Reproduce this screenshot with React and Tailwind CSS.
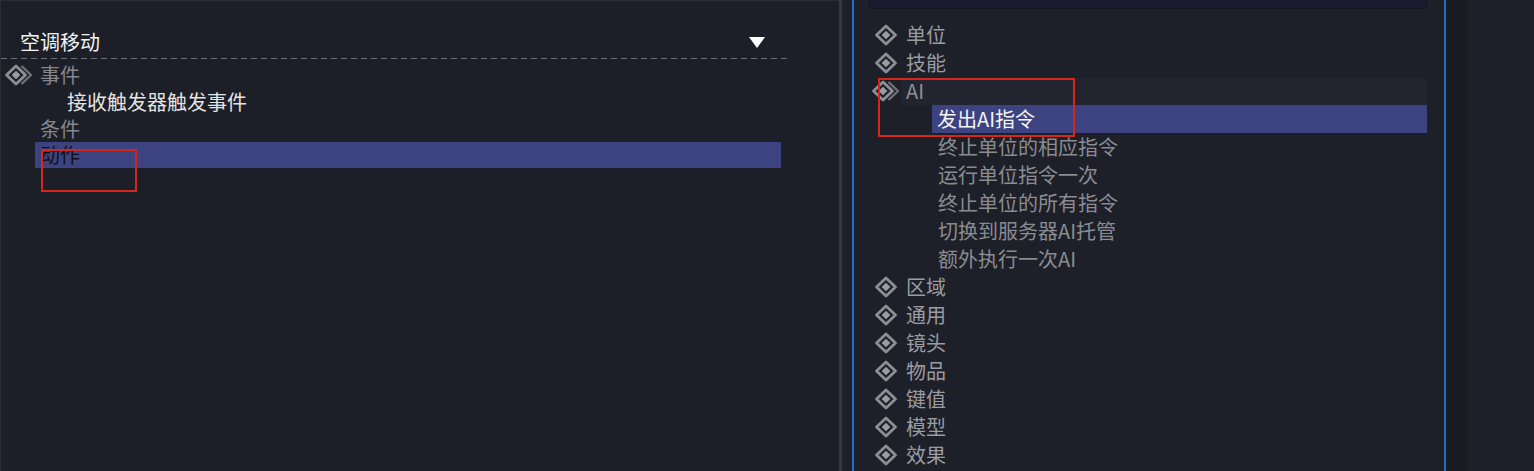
import React from "react";

function Diamond({ expanded = false, className = "" }) {
  return (
    <svg
      width={expanded ? 30 : 24}
      height="22"
      viewBox={expanded ? "0 0 30 22" : "0 0 24 22"}
      className={"shrink-0 " + className}
    >
      <polygon
        points="12,2 21.5,11 12,20 2.5,11"
        fill="none"
        stroke="#8d8f95"
        strokeWidth="2.8"
        strokeLinejoin="round"
      />
      <polygon points="12,6.8 16.4,11 12,15.2 7.6,11" fill="#9a9ca2" />
      {expanded && (
        <polyline
          points="17.5,2 27,11 17.5,20"
          fill="none"
          stroke="#6f7177"
          strokeWidth="2.4"
          strokeLinejoin="round"
        />
      )}
    </svg>
  );
}

const cats = ["区域", "通用", "镜头", "物品", "键值", "模型", "效果"];
const aiItems = [
  "终止单位的相应指令",
  "运行单位指令一次",
  "终止单位的所有指令",
  "切换到服务器AI托管",
  "额外执行一次AI",
];

export default function App() {
  return (
    <div className="flex h-[471px] w-[1534px] overflow-hidden bg-[#1c1f27] font-['Noto_Sans_CJK_SC',sans-serif] text-[20px] leading-[28px]">
      {/* Left panel */}
      <div className="relative flex w-[839px] shrink-0 flex-col border-l border-t border-[#2a2d35] bg-[#1c1f27]">
        <div className="mt-[26px] flex h-[30px] items-center pl-[19px] pr-[74px]">
          <span className="text-[#f2f2f2]">空调移动</span>
          <svg width="16" height="11" viewBox="0 0 16 11" className="ml-auto shrink-0">
            <polygon points="0,0 16,0 8,11" fill="#ffffff" />
          </svg>
        </div>
        <div className="mt-[1px] h-[1px] w-[787px] bg-[repeating-linear-gradient(90deg,#6a6d74_0px,#6a6d74_6px,transparent_6px,transparent_10px)]" />
        <div className="flex flex-col pt-[2px]">
          <div className="flex h-[27px] items-center">
            <Diamond expanded className="ml-[3px]" />
            <span className="ml-[6px] text-[#85878d]">事件</span>
          </div>
          <div className="flex h-[27px] items-center pl-[66px] text-[#e4e4e4]">
            接收触发器触发事件
          </div>
          <div className="flex h-[27px] items-center pl-[39px] text-[#85878d]">
            条件
          </div>
          <div className="ml-[34px] flex h-[26px] w-[746px] items-center bg-[#3c4380] pl-[5px] text-[#111111]">
            动作
          </div>
        </div>
        <div className="absolute left-[40px] top-[148px] h-[43px] w-[96px] border-2 border-[#d5261c]" />
      </div>

      {/* separators */}
      <div className="w-[3px] shrink-0 bg-[#34373e]" />
      <div className="w-[10px] shrink-0 bg-[#1d2028]" />
      <div className="w-[2px] shrink-0 bg-[#1f6fc2]" />

      {/* Right panel */}
      <div className="relative flex w-[590px] shrink-0 flex-col bg-[#1e2029]">
        <div className="ml-[15px] h-[9px] w-[558px] border-x border-b border-[#15161d] bg-[#1a1b30]" />
        <div className="mt-[12px] flex flex-col pr-[17px]">
          <div className="flex h-[28px] items-center">
            <Diamond className="ml-[20px]" />
            <span className="ml-[8px] text-[#9a9ca2]">单位</span>
          </div>
          <div className="flex h-[28px] items-center">
            <Diamond className="ml-[20px]" />
            <span className="ml-[8px] text-[#9a9ca2]">技能</span>
          </div>
          <div className="flex h-[28px] items-center">
            <Diamond expanded className="ml-[17px]" />
            <div className="flex h-[27px] flex-1 items-center bg-[#22242f] pl-[5px] text-[#8e9096]">
              AI
            </div>
          </div>
          <div className="ml-[78px] flex h-[28px] items-center bg-[#3c4380] pl-[5px] text-[#f4f4f4]">
            发出AI指令
          </div>
          {aiItems.map((t) => (
            <div key={t} className="flex h-[28px] items-center pl-[84px] text-[#8a8c91]">
              {t}
            </div>
          ))}
          {cats.map((t) => (
            <div key={t} className="flex h-[28px] items-center">
              <Diamond className="ml-[20px]" />
              <span className="ml-[8px] text-[#9a9ca2]">{t}</span>
            </div>
          ))}
        </div>
        <div className="absolute left-[24px] top-[78px] h-[59px] w-[197px] border-2 border-[#d5261c]" />
      </div>

      <div className="w-[2px] shrink-0 bg-[#1f6fc2]" />
      <div className="flex flex-1">
        <div className="w-[22px] bg-[#1a1c23]" />
        <div className="flex-1 bg-[#1d2028]" />
      </div>
    </div>
  );
}
